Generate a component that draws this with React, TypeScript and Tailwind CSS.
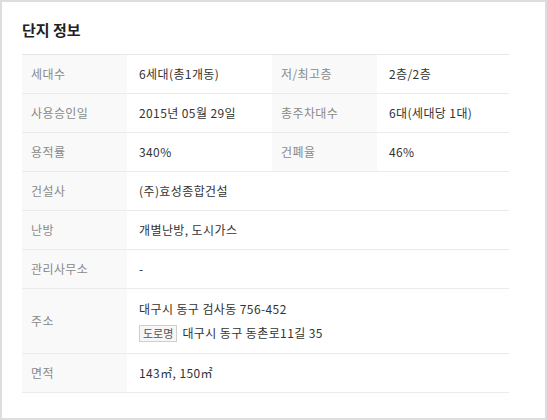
import React from "react";

const font = { fontFamily: '"Noto Sans CJK KR", "Noto Sans", sans-serif' };

function Label({ children }: { children: React.ReactNode }) {
  return (
    <div className="flex items-center bg-[#f9f9f9] pl-[9px] text-[12px] tracking-[0.4px] text-[#8a8a8a]">
      {children}
    </div>
  );
}

function Value({ children, span }: { children: React.ReactNode; span?: boolean }) {
  return (
    <div
      className={`flex items-center pl-[12px] text-[12px] tracking-[0.4px] text-[#333] ${
        span ? "col-span-3" : ""
      }`}
    >
      {children}
    </div>
  );
}

function Row({ children, tall }: { children: React.ReactNode; tall?: boolean }) {
  return (
    <div
      className={`grid grid-cols-[105px_145px_105px_132px] border-b border-[#ebebeb] ${
        tall ? "h-[65px]" : "h-[39px]"
      }`}
    >
      {children}
    </div>
  );
}

export default function App() {
  return (
    <div
      className="box-border h-[420px] w-[547px] border-2 border-[#dddddd] bg-white"
      style={font}
    >
      <div className="pl-[20px] pt-[18px]">
        <h2 className="h-[34px] text-[15px] font-bold leading-[20px] text-[#222]">단지 정보</h2>
        <div className="w-[487px] border-t border-[#e6e6e6]">
          <Row>
            <Label>세대수</Label>
            <Value>6세대(총1개동)</Value>
            <Label>저/최고층</Label>
            <Value>2층/2층</Value>
          </Row>
          <Row>
            <Label>사용승인일</Label>
            <Value>2015년 05월 29일</Value>
            <Label>총주차대수</Label>
            <Value>6대(세대당 1대)</Value>
          </Row>
          <Row>
            <Label>용적률</Label>
            <Value>340%</Value>
            <Label>건폐율</Label>
            <Value>46%</Value>
          </Row>
          <Row>
            <Label>건설사</Label>
            <Value span>(주)효성종합건설</Value>
          </Row>
          <Row>
            <Label>난방</Label>
            <Value span>개별난방, 도시가스</Value>
          </Row>
          <Row>
            <Label>관리사무소</Label>
            <Value span>-</Value>
          </Row>
          <Row tall>
            <Label>주소</Label>
            <div className="col-span-3 flex flex-col justify-center pl-[12px] text-[12px] leading-[24px] tracking-[0.4px] text-[#333]">
              <div>대구시 동구 검사동 756-452</div>
              <div className="flex items-center">
                <span className="mr-[5px] box-border flex h-[17px] items-center border border-[#cfcfcf] bg-[#f6f6f6] px-[3px] text-[11px] leading-none tracking-normal text-[#555]">
                  도로명
                </span>
                대구시 동구 동촌로11길 35
              </div>
            </div>
          </Row>
          <Row>
            <Label>면적</Label>
            <Value span>143㎡, 150㎡</Value>
          </Row>
        </div>
      </div>
    </div>
  );
}
